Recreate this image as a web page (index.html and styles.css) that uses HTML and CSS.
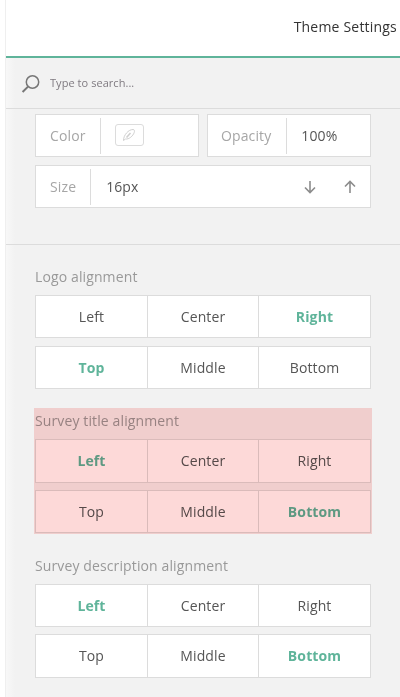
FILE: index.html
```html
<!DOCTYPE html>
<html lang="en">
<head>
<meta charset="utf-8">
<title>Theme Settings</title>
<link rel="stylesheet" href="styles.css">
</head>
<body>
<div class="panel">
  <header class="topbar"><span class="title">Theme Settings</span></header>
  <div class="search">
    <svg class="search-icon" width="20" height="20" viewBox="0 0 20 20" fill="none" stroke="#777" aria-hidden="true">
      <circle cx="11.5" cy="9" r="6.2" stroke-width="1.5"/>
      <path d="M7 13.6 1.6 19" stroke-width="2"/>
    </svg>
    <span class="search-text">Type to search...</span>
  </div>
  <section class="fields">
    <div class="field-row">
      <div class="field field-color">
        <span class="field-label">Color</span>
        <span class="field-body field-body-swatch">
          <span class="swatch">
            <svg width="14" height="14" viewBox="0 0 14 14" fill="none" stroke="#d0d0d0" aria-hidden="true">
              <path d="M1.5 12.5C1.5 7 6.5 1.5 11 1.5c1.5 0 1.8 1.5 1.2 3C11 8 7 11.5 3.5 11Z" stroke-width="1"/>
              <path d="M4.5 9.5 8.5 5" stroke-width="1.6"/>
            </svg>
          </span>
        </span>
      </div>
      <div class="field field-opacity">
        <span class="field-label">Opacity</span>
        <span class="field-body field-value">100%</span>
      </div>
    </div>
    <div class="field field-size">
      <span class="field-label">Size</span>
      <span class="field-body field-value">16px</span>
      <span class="steppers">
        <svg width="12" height="14" viewBox="0 0 12 14" fill="none" stroke="#8c8c8c" stroke-width="1.6" aria-hidden="true"><path d="M6 1v11.5M1 7.5l5 5 5-5"/></svg>
        <svg width="12" height="14" viewBox="0 0 12 14" fill="none" stroke="#8c8c8c" stroke-width="1.6" aria-hidden="true"><path d="M6 13V1.5M1 6.5l5-5 5 5"/></svg>
      </span>
    </div>
  </section>
  <section class="alignments">
    <div class="group">
      <div class="group-label">Logo alignment</div>
      <div class="seg"><span>Left</span><span>Center</span><span class="on">Right</span></div>
      <div class="seg"><span class="on">Top</span><span>Middle</span><span>Bottom</span></div>
    </div>
    <div class="group group-highlight">
      <div class="group-label">Survey title alignment</div>
      <div class="seg"><span class="on">Left</span><span>Center</span><span>Right</span></div>
      <div class="seg"><span>Top</span><span>Middle</span><span class="on">Bottom</span></div>
    </div>
    <div class="group">
      <div class="group-label">Survey description alignment</div>
      <div class="seg"><span class="on">Left</span><span>Center</span><span>Right</span></div>
      <div class="seg"><span>Top</span><span>Middle</span><span class="on">Bottom</span></div>
    </div>
  </section>
</div>
</body>
</html>
```

FILE: styles.css
```css
* { box-sizing: border-box; }
html, body { margin: 0; height: 697px; overflow: hidden; background: #fff; }
body {
  font-family: "Open Sans", "Liberation Sans", sans-serif;
  font-size: 14px;
  letter-spacing: 0.12px;
  color: #444;
}
.panel {
  margin-left: 5px;
  height: 697px;
  border-left: 1px solid #efefef;
  background: linear-gradient(90deg, #f8f8f8, #f2f2f2 9px);
  display: flex;
  flex-direction: column;
}
.topbar {
  height: 58px;
  flex: none;
  background: #fff;
  border-bottom: 2px solid #5fb49a;
  display: flex;
  align-items: center;
  justify-content: flex-end;
  padding: 0 3px 3px 0;
}
.title { color: #333; line-height: 20px; letter-spacing: 0.2px; }
.search {
  height: 51px;
  flex: none;
  border-bottom: 1px solid #dcdcdc;
  display: flex;
  align-items: center;
  padding-left: 15px;
  gap: 9px;
}
.search-icon { flex: none; }
.search-text { font-size: 11px; color: #7f7a80; line-height: 16px; letter-spacing: 0.05px; }
.fields {
  height: 136px;
  flex: none;
  padding: 5px 29px 0;
  border-bottom: 1px solid #dcdcdc;
  display: flex;
  flex-direction: column;
  gap: 8px;
}
.field-row { display: flex; gap: 8px; }
.field {
  height: 43px;
  background: #fff;
  border: 1px solid #dcdcdc;
  display: flex;
  align-items: stretch;
}
.field-color { width: 164px; }
.field-opacity { width: 164px; }
.field-label {
  color: #a6a6a6;
  padding: 0 15px 0 14px;
  display: flex;
  align-items: center;
  position: relative;
}
.field-opacity .field-label { padding: 0 16px 0 13px; }
.field-label::after {
  content: "";
  position: absolute;
  right: 0;
  top: 3px;
  bottom: 2px;
  width: 1px;
  background: #dcdcdc;
}
.field-body { display: flex; align-items: center; padding: 0 0 1px 15px; flex: 1; }
.field-body-swatch { padding-left: 14px; }
.field-opacity .field-body { padding-left: 14px; }
.field-value { color: #555; }
.swatch {
  width: 29px;
  height: 22px;
  border: 1px solid #dcdcdc;
  border-radius: 3px;
  display: flex;
  align-items: center;
  justify-content: center;
}
.steppers { display: flex; gap: 28px; align-items: center; padding-right: 14px; }
.alignments {
  padding: 22px 29px 0;
  display: flex;
  flex-direction: column;
  gap: 22.25px;
}
.group { display: flex; flex-direction: column; gap: 7.3px; position: relative; }
.group-label { color: #999; line-height: 20px; height: 20px; margin-bottom: 0.7px; }
.seg {
  height: 43.4px;
  background: #fff;
  border: 1px solid #dcdcdc;
  display: grid;
  grid-template-columns: 111px 111px 1fr;
}
.seg span {
  display: flex;
  align-items: center;
  justify-content: center;
  color: #555;
}
.seg span + span { border-left: 1px solid #dcdcdc; }
.seg .on { color: #5fb49a; font-weight: 700; }
.group-highlight::after {
  content: "";
  position: absolute;
  inset: -3.35px -1px -0.55px;
  background: #fdd9d8;
  mix-blend-mode: multiply;
}
```
